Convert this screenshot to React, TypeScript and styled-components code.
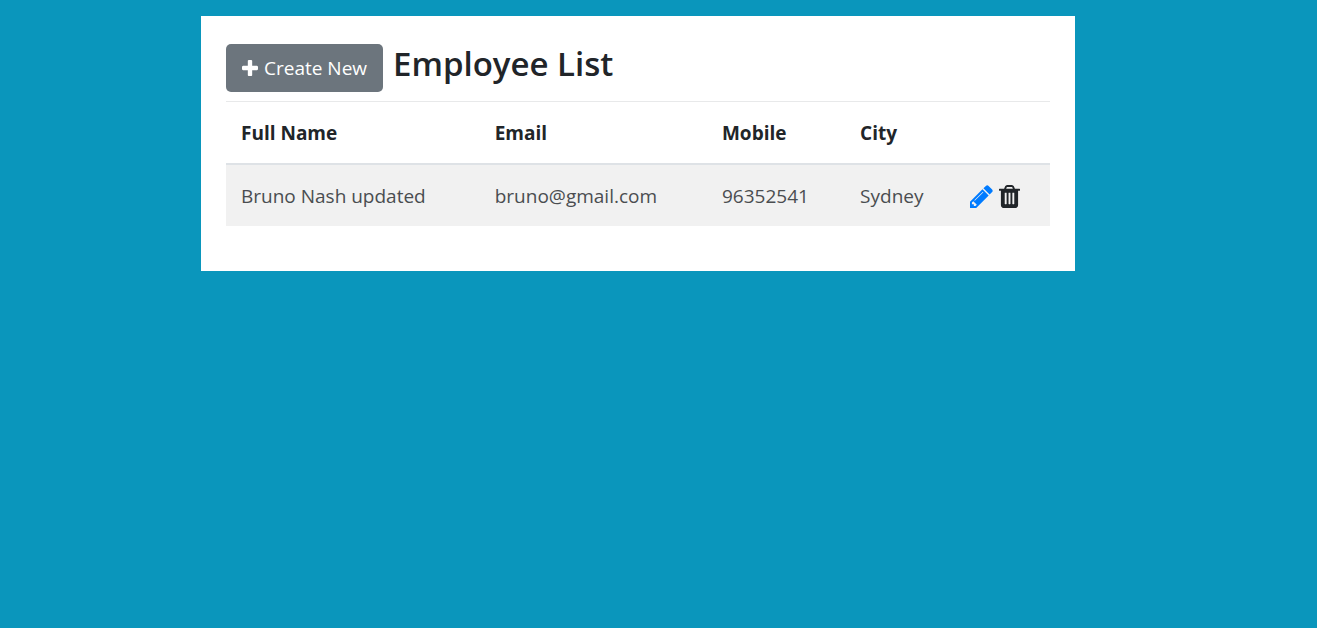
import React from "react";
import styled, { createGlobalStyle } from "styled-components";

const GlobalStyle = createGlobalStyle`
  *, *::before, *::after { box-sizing: border-box; }
  body {
    margin: 0;
    background: #0a96bc;
    color: #212529;
    font-family: "Segoe UI", "Open Sans", "Noto Sans", sans-serif;
    font-size: 19px;
    line-height: 29px;
  }
`;

const Page = styled.main`
  padding: 16px 41px 16px 0;
`;

const Card = styled.section`
  width: 100%;
  max-width: 874px;
  margin: 0 auto;
  padding: 28px 25px 45px;
  background: #fff;
`;

const Header = styled.header`
  display: flex;
  align-items: center;
  gap: 10px;
  padding-bottom: 9px;
  border-bottom: 1px solid #e8e9ea;
`;

const CreateButton = styled.button`
  display: inline-flex;
  align-items: center;
  gap: 6px;
  height: 48px;
  padding: 0 16px;
  border: 0;
  border-radius: 5px;
  background: #6c757d;
  color: #fff;
  font: inherit;
  cursor: pointer;
`;

const Title = styled.h1`
  margin: 0 0 8px;
  font-size: 33px;
  font-weight: 600;
  line-height: 40px;
`;

const Table = styled.table`
  width: 100%;
  border-collapse: separate;
  border-spacing: 0;
`;

const HeadCell = styled.th`
  height: 63px;
  padding: 2px 15px 0;
  border-bottom: 2px solid #dee2e6;
  text-align: left;
  font-weight: 700;
`;

const Cell = styled.td`
  height: 61px;
  padding: 2px 15px 0;
  background: #f1f1f1;
  color: #4a4d50;
  white-space: nowrap;
`;

const Actions = styled.div`
  display: flex;
  align-items: center;
  gap: 6px;
`;

const IconButton = styled.button<{ $color: string }>`
  display: flex;
  padding: 0;
  border: 0;
  background: none;
  color: ${({ $color }) => $color};
  cursor: pointer;
`;

const Glyph = styled.svg`
  display: block;
  fill: currentColor;
`;

const PlusIcon = () => (
  <Glyph viewBox="192 128 1408 1408" width={16} height={16} aria-hidden>
    <path d="M1600 736v192q0 40-28 68t-68 28h-416v416q0 40-28 68t-68 28h-192q-40 0-68-28t-28-68v-416h-416q-40 0-68-28t-28-68v-192q0-40 28-68t68-28h416v-416q0-40 28-68t68-28h192q40 0 68 28t28 68v416h416q40 0 68 28t28 68z" />
  </Glyph>
);

const PencilIcon = () => (
  <Glyph viewBox="128 128 1536 1536" width={23} height={23} aria-hidden>
    <path d="M491 1536l91-91-235-235-91 91v107h128v128h107zm523-928q0-22-22-22-10 0-17 7l-542 542q-7 7-7 17 0 22 22 22 10 0 17-7l542-542q7-7 7-17zm-54-192l416 416-832 832h-416v-416zm683 96q0 53-37 90l-166 166-416-416 166-165q36-38 90-38 53 0 91 38l235 234q37 39 37 91z" />
  </Glyph>
);

const TrashIcon = () => (
  <Glyph viewBox="192 128 1408 1536" width={21} height={23} aria-hidden>
    <path d="M704 1376v-704q0-14-9-23t-23-9h-64q-14 0-23 9t-9 23v704q0 14 9 23t23 9h64q14 0 23-9t9-23zm256 0v-704q0-14-9-23t-23-9h-64q-14 0-23 9t-9 23v704q0 14 9 23t23 9h64q14 0 23-9t9-23zm256 0v-704q0-14-9-23t-23-9h-64q-14 0-23 9t-9 23v704q0 14 9 23t23 9h64q14 0 23-9t9-23zm-544-992h448l-48-117q-7-9-17-11h-317q-10 2-17 11zm928 32v64q0 14-9 23t-23 9h-96v948q0 83-47 143.5t-113 60.5h-832q-66 0-113-58.5t-47-141.5v-952h-96q-14 0-23-9t-9-23v-64q0-14 9-23t23-9h309l70-167q15-37 54-63t79-26h320q40 0 79 26t54 63l70 167h309q14 0 23 9t9 23z" />
  </Glyph>
);

const employees = [
  { name: "Bruno Nash updated", email: "bruno@gmail.com", mobile: "96352541", city: "Sydney" },
];

export default function App() {
  return (
    <>
      <GlobalStyle />
      <Page>
        <Card>
          <Header>
            <CreateButton type="button">
              <PlusIcon />
              Create New
            </CreateButton>
            <Title>Employee List</Title>
          </Header>
          <Table>
            <thead>
              <tr>
                <HeadCell scope="col">Full Name</HeadCell>
                <HeadCell scope="col">Email</HeadCell>
                <HeadCell scope="col">Mobile</HeadCell>
                <HeadCell scope="col">City</HeadCell>
                <HeadCell as="td" />
              </tr>
            </thead>
            <tbody>
              {employees.map((e) => (
                <tr key={e.email}>
                  <Cell>{e.name}</Cell>
                  <Cell>{e.email}</Cell>
                  <Cell>{e.mobile}</Cell>
                  <Cell>{e.city}</Cell>
                  <Cell>
                    <Actions>
                      <IconButton type="button" $color="#007bff" aria-label="Edit">
                        <PencilIcon />
                      </IconButton>
                      <IconButton type="button" $color="#212529" aria-label="Delete">
                        <TrashIcon />
                      </IconButton>
                    </Actions>
                  </Cell>
                </tr>
              ))}
            </tbody>
          </Table>
        </Card>
      </Page>
    </>
  );
}
